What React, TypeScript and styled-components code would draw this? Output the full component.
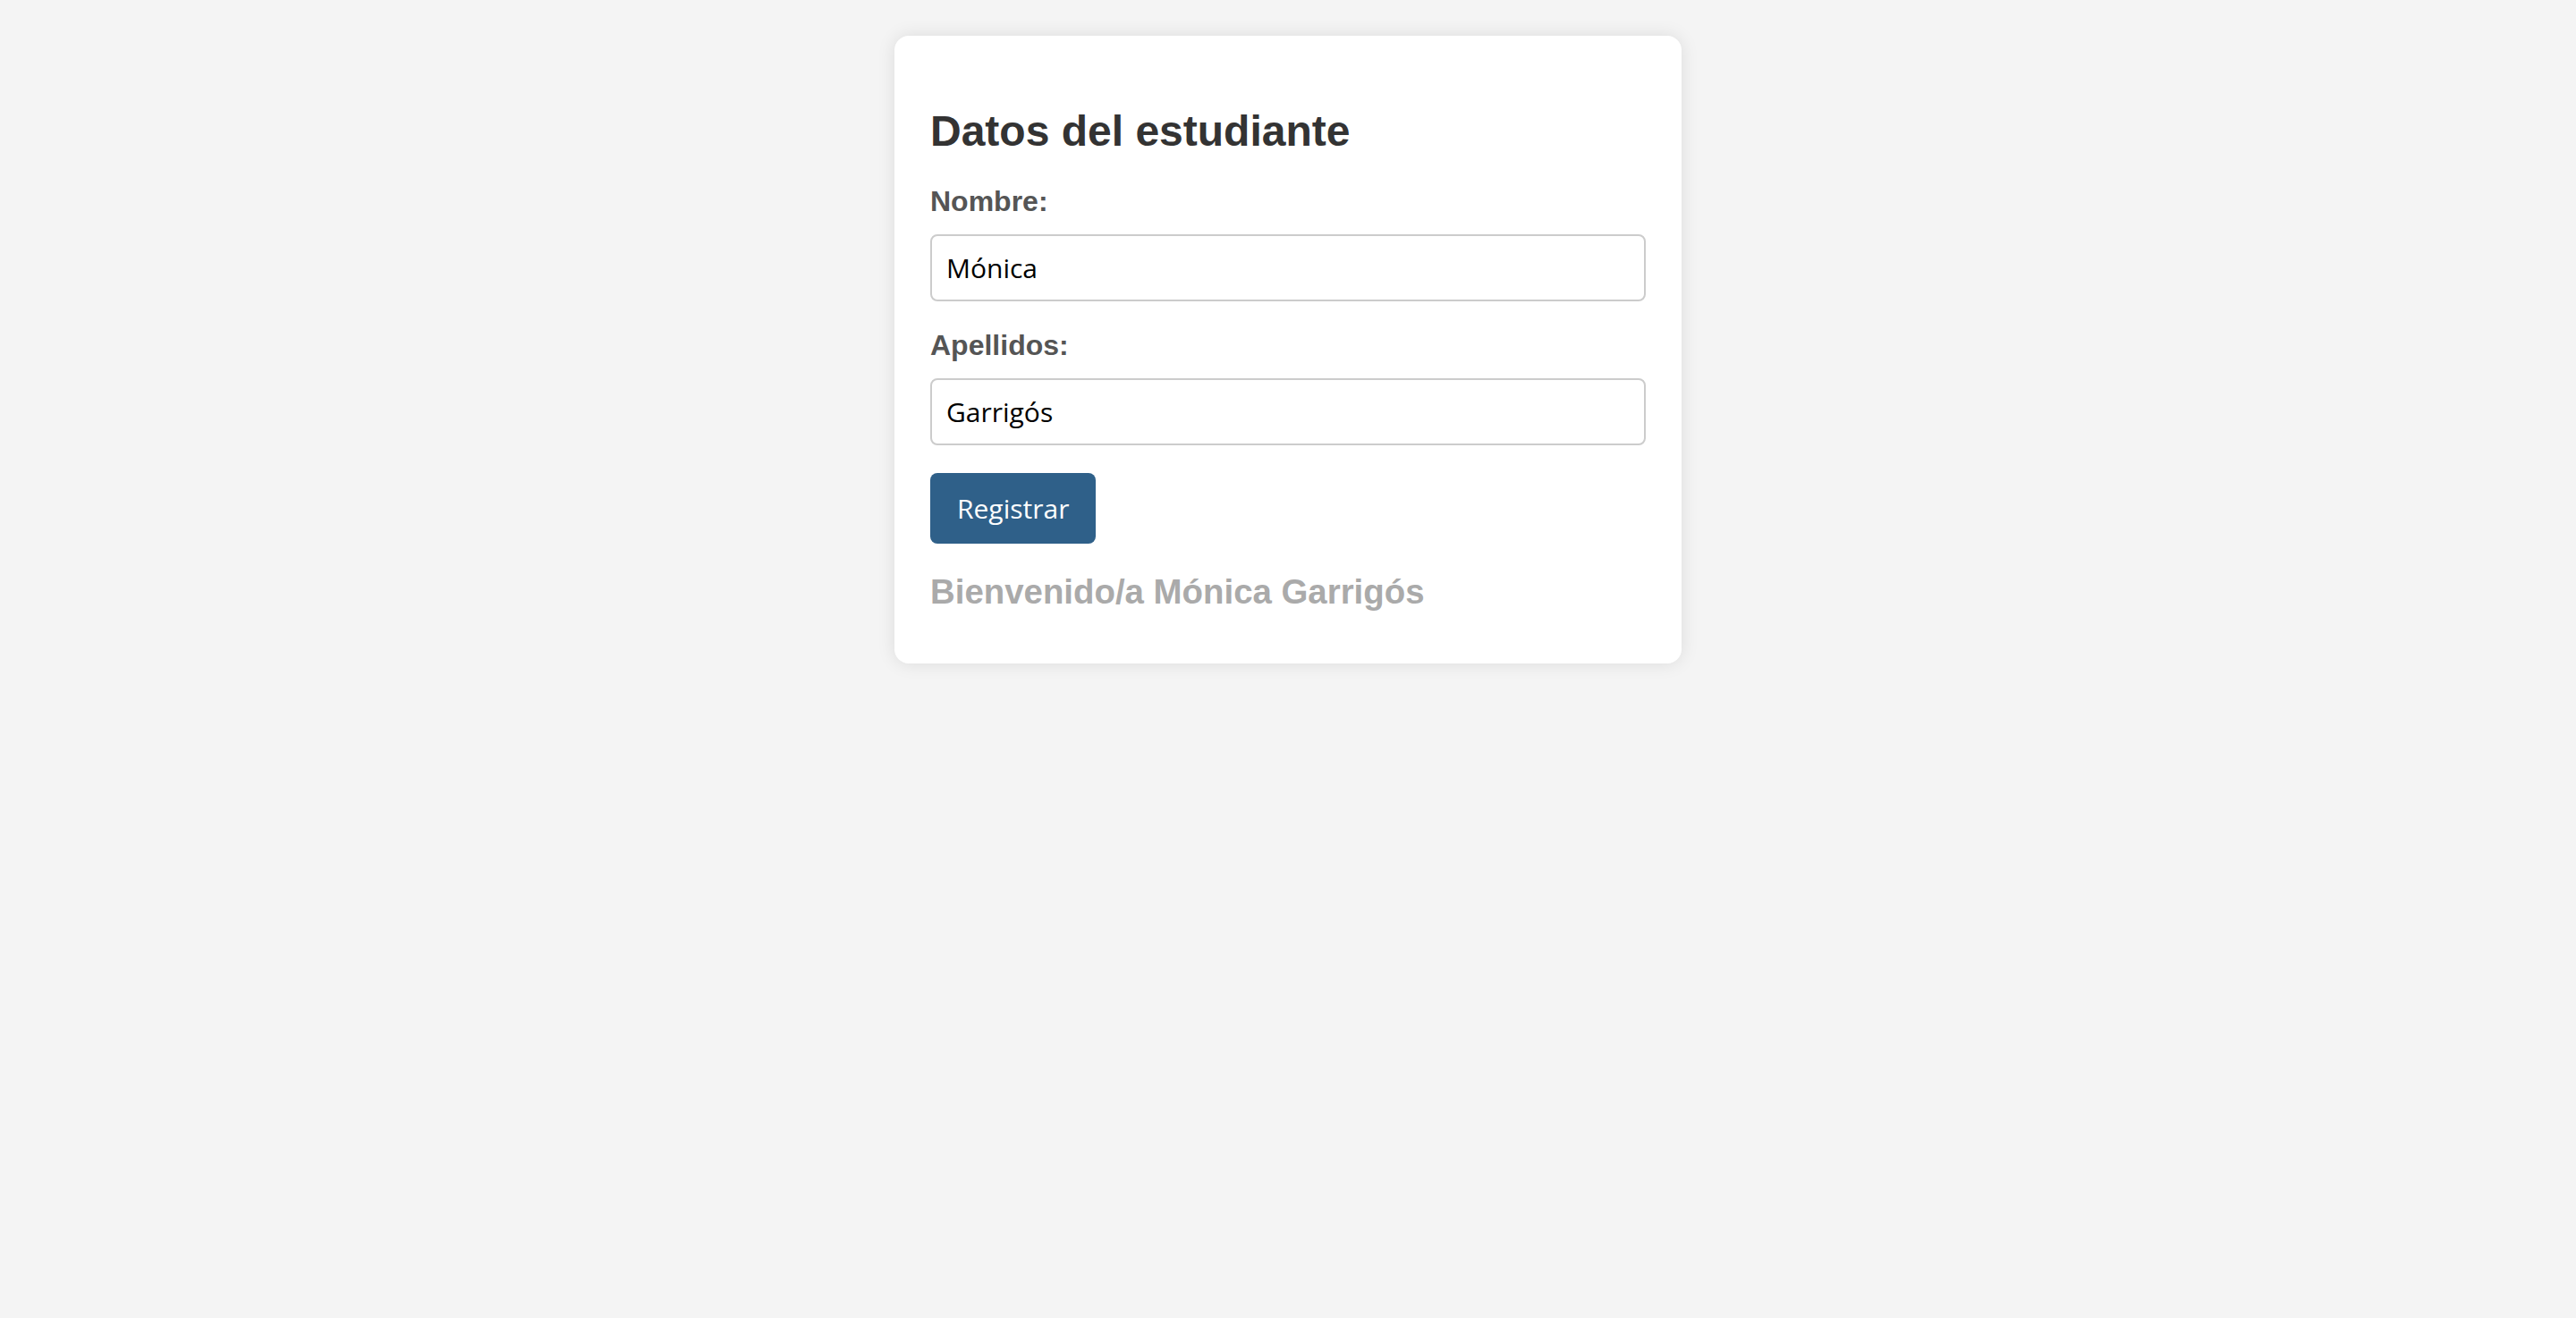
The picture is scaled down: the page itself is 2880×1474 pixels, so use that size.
import React, { useState } from "react";
import styled, { createGlobalStyle } from "styled-components";

const GlobalStyle = createGlobalStyle`
  html, body {
    margin: 0;
    padding: 0;
    background: #f4f4f4;
    font-family: "Liberation Sans", Arial, sans-serif;
  }
  body {
    min-height: 1474px;
  }
`;

const Card = styled.div`
  width: 880px;
  box-sizing: border-box;
  margin: 40px auto 0;
  padding: 40px;
  background: #fff;
  border-radius: 16px;
  box-shadow: 0 0 20px rgba(0, 0, 0, 0.1);
`;

const Title = styled.h2`
  margin: 39px 0 33px;
  font-size: 48px;
  font-weight: bold;
  color: #333;
`;

const Label = styled.label`
  display: block;
  margin-bottom: 18px;
  font-size: 32px;
  font-weight: bold;
  color: #555;
`;

const Input = styled.input`
  display: block;
  width: 100%;
  height: 75px;
  box-sizing: border-box;
  margin-bottom: 31px;
  padding: 0 16px;
  border: 2px solid #ccc;
  border-radius: 8px;
  font-family: "Open Sans", "Noto Sans", sans-serif;
  font-size: 30px;
  color: #000;
  background: #fff;
  outline: none;
`;

const Button = styled.button`
  display: block;
  height: 79px;
  padding: 0 30px;
  border: none;
  border-radius: 8px;
  background: #2f6089;
  color: #fff;
  font-family: "Open Sans", "Noto Sans", sans-serif;
  font-size: 30px;
  cursor: pointer;
`;

const Welcome = styled.h3`
  margin: 32px 0 18px;
  font-size: 38.4px;
  font-weight: bold;
  color: #aaa;
`;

export default function App() {
  const [nombre, setNombre] = useState("Mónica");
  const [apellidos, setApellidos] = useState("Garrigós");
  const [saludo, setSaludo] = useState("Bienvenido/a Mónica Garrigós");

  return (
    <>
      <GlobalStyle />
      <Card>
        <Title>Datos del estudiante</Title>
        <Label htmlFor="nombre">Nombre:</Label>
        <Input
          id="nombre"
          value={nombre}
          onChange={(e) => setNombre(e.target.value)}
        />
        <Label htmlFor="apellidos">Apellidos:</Label>
        <Input
          id="apellidos"
          value={apellidos}
          onChange={(e) => setApellidos(e.target.value)}
        />
        <Button onClick={() => setSaludo(`Bienvenido/a ${nombre} ${apellidos}`)}>
          Registrar
        </Button>
        <Welcome>{saludo}</Welcome>
      </Card>
    </>
  );
}
